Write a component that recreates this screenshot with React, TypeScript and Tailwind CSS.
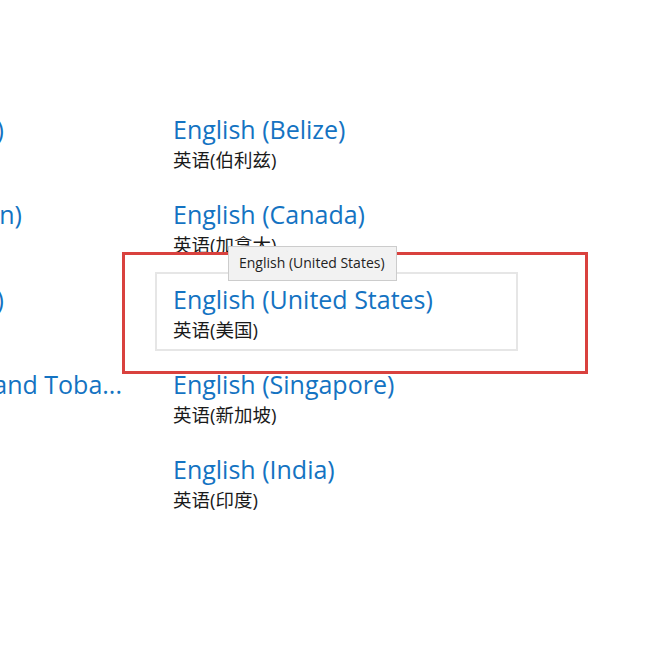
import React from "react";

const font = { fontFamily: '"Open Sans", "Noto Sans CJK SC", sans-serif' };

const right = [
  { t: "English (Belize)", s: "英语(伯利兹)" },
  { t: "English (Canada)", s: "英语(加拿大)" },
  { t: "English (United States)", s: "英语(美国)", hover: true },
  { t: "English (Singapore)", s: "英语(新加坡)" },
  { t: "English (India)", s: "英语(印度)" },
];

const left = [
  { t: "English (Australia)", mr: "mr-[121px]" },
  { t: "English (Caribbean)", mr: "mr-[103px]" },
  { t: "English (Ireland)", mr: "mr-[121px]" },
  { t: "English (Trinidad and Toba...", mr: "mr-[3px]" },
];

export default function App() {
  return (
    <div className="relative w-[648px] h-[652px] bg-white overflow-hidden" style={font}>
      <div className="flex pt-[102px]">
        <div className="w-[125px] overflow-hidden flex flex-col gap-[6px]">
          {left.map((r, i) => (
            <div key={i} className="h-[79px] flex justify-end">
              <div className={`whitespace-nowrap text-[25px] leading-[30px] text-[#1473c2] pt-[12px] ${r.mr}`}>{r.t}</div>
            </div>
          ))}
        </div>
        <div className="ml-[30px] flex flex-col gap-[6px]">
          {right.map((r, i) => (
            <div
              key={i}
              className={`w-[363px] h-[79px] pl-[16px] pt-[10px] border-2 ${r.hover ? "border-[#e6e6e6]" : "border-transparent"}`}
            >
              <div className="whitespace-nowrap text-[25px] leading-[30px] text-[#1473c2]">{r.t}</div>
              <div className="mt-[4px] whitespace-nowrap text-[18.5px] leading-[24px] text-[#1a1a1a]">{r.s}</div>
            </div>
          ))}
        </div>
      </div>
      <div className="absolute left-[122px] top-[252px] w-[466px] h-[122px] border-[3px] border-[#d9413e]" />
      <div className="absolute left-[228px] top-[246px] w-[169px] h-[35px] bg-[#f2f2f2] border border-[#cccccc] pl-[10px] pt-[7px] text-[14px] leading-[18px] text-[#222] whitespace-nowrap">
        English (United States)
      </div>
    </div>
  );
}
